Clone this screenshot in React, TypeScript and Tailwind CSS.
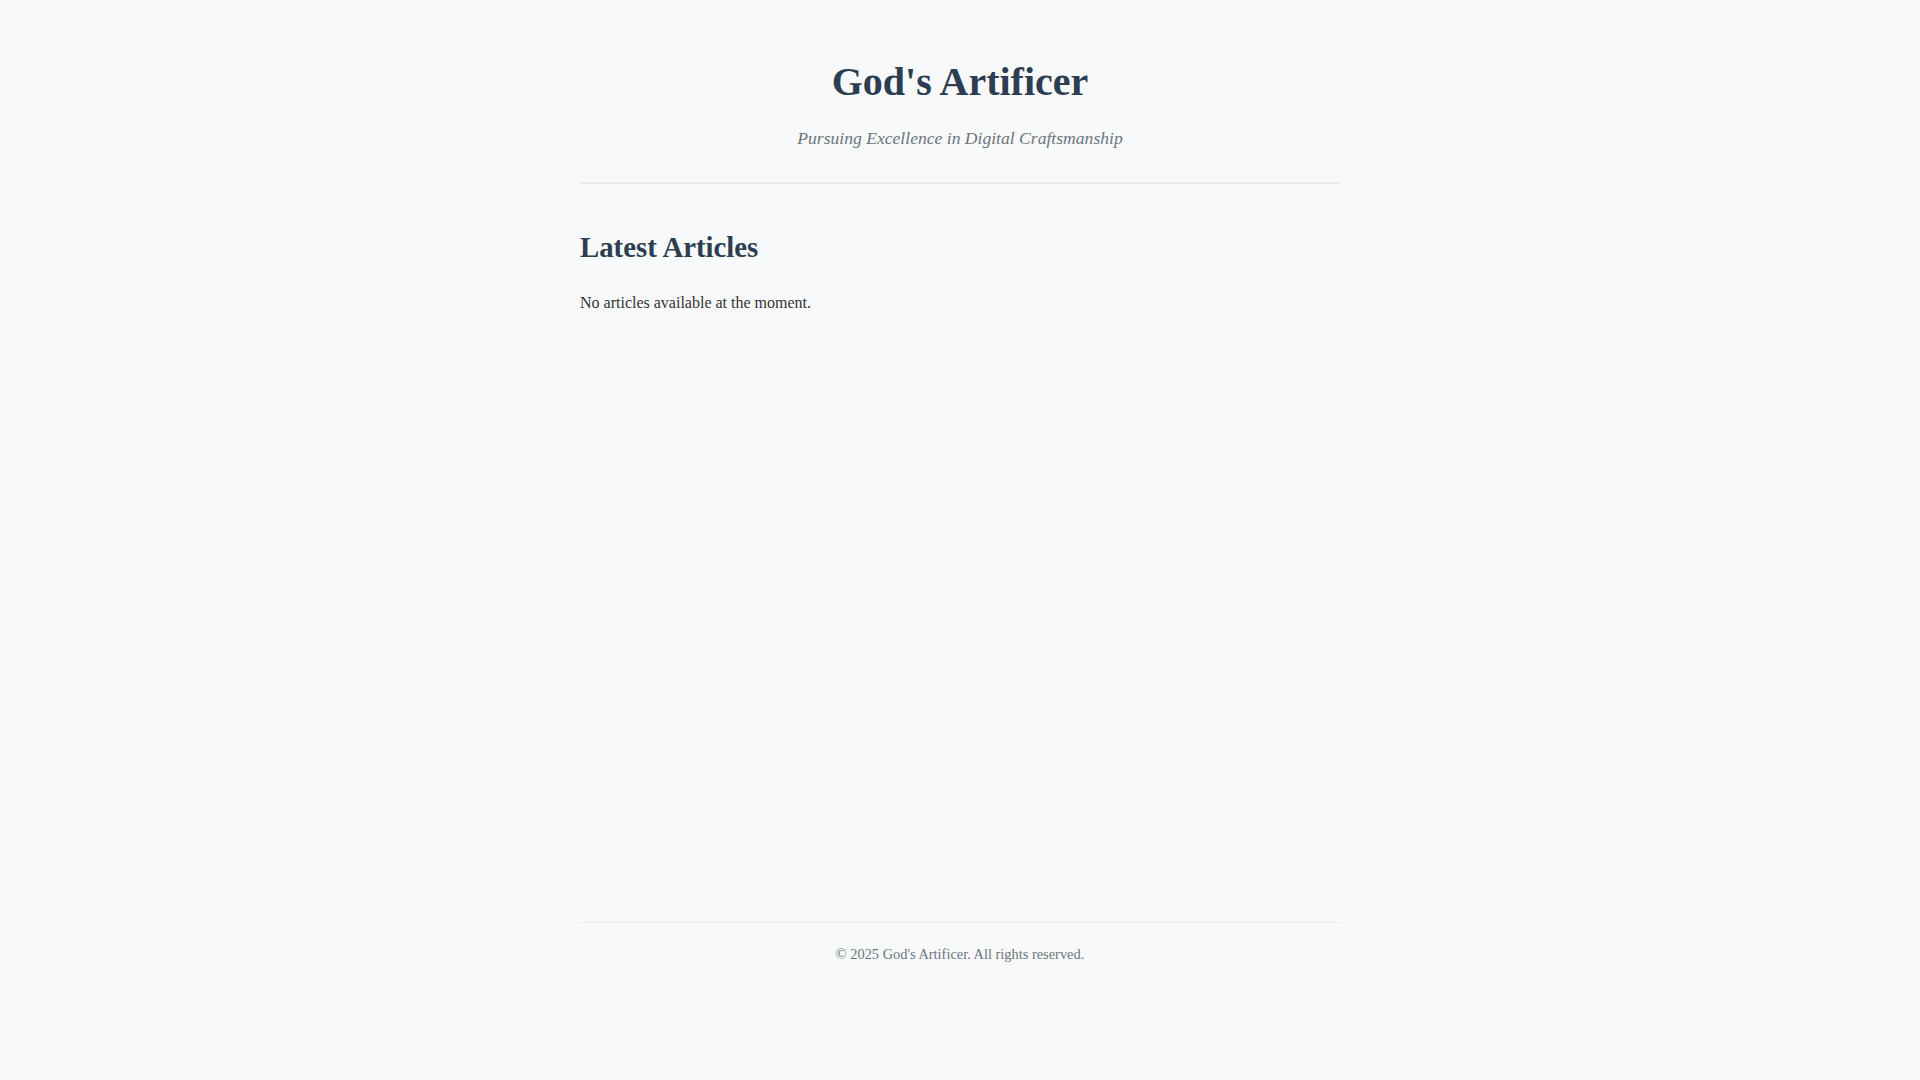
export default function App() {
  return (
    <div
      className="min-h-screen w-full bg-[#f8f9fa] text-[#333333]"
      style={{ fontFamily: '"Liberation Serif", "Times New Roman", serif' }}
    >
      <div className="mx-auto w-[760px]">
        <header className="border-b-2 border-[#e9ecef] pt-[58px] pb-[32px] text-center">
          <h1 className="m-0 text-[40px] leading-[48px] font-bold text-[#2c3e50]">
            God&apos;s Artificer
          </h1>
          <p className="mt-[20px] text-[17.6px] leading-[24px] italic text-[#6c757d]">
            Pursuing Excellence in Digital Craftsmanship
          </p>
        </header>
        <main className="h-[738px] pt-[46px]">
          <h2 className="text-[28.8px] leading-[34px] font-bold text-[#2c3e50]">
            Latest Articles
          </h2>
          <p className="mt-[27px] text-[16px] leading-[24px] text-[#333333]">
            No articles available at the moment.
          </p>
        </main>
        <footer className="border-t border-[#e9ecef] pt-[21px] pb-[40px] text-center">
          <p className="text-[14.4px] leading-[20px] text-[#6c757d]">
            © 2025 God&apos;s Artificer. All rights reserved.
          </p>
        </footer>
      </div>
    </div>
  );
}
